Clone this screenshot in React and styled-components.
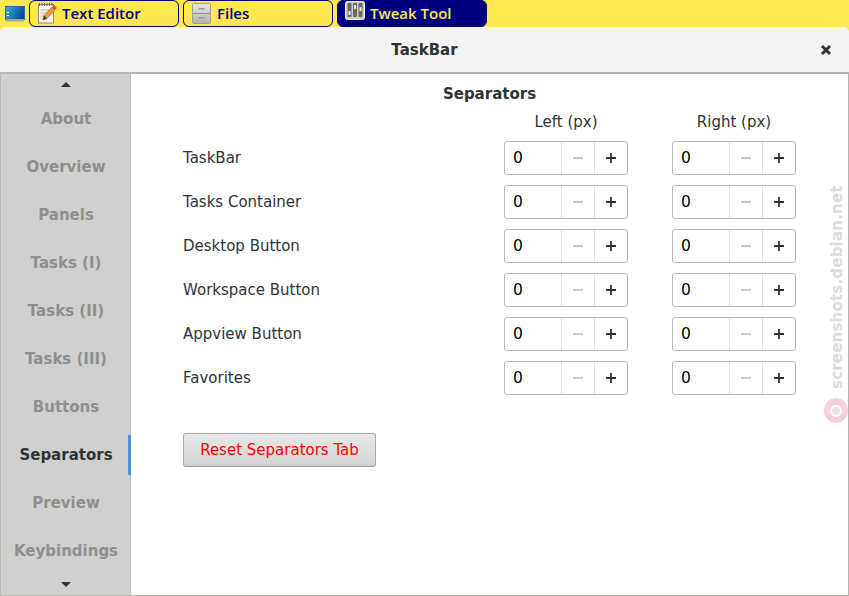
import React from 'react';
import styled, { createGlobalStyle } from 'styled-components';

const GlobalStyle = createGlobalStyle`
  html, body {
    margin: 0;
    padding: 0;
    width: 849px;
    height: 596px;
    overflow: hidden;
    background: #ffe84f;
  }
  * { box-sizing: border-box; }
`;

const Page = styled.div`
  position: relative;
  width: 849px;
  height: 596px;
  display: flex;
  flex-direction: column;
  font-family: "DejaVu Sans", sans-serif;
  color: #2e3436;
`;

const TaskBar = styled.div`
  height: 27px;
  display: flex;
  align-items: stretch;
  gap: 4px;
  padding-left: 5px;
  background: #ffe84f;
`;

const DesktopIcon = styled.div`
  display: flex;
  align-items: center;
  width: 20px;
`;

const Task = styled.div`
  width: 150px;
  height: 27px;
  display: flex;
  align-items: center;
  gap: 5px;
  padding: 0 0 1px 7px;
  border: 1px solid #000080;
  border-radius: 6px;
  background: ${p => (p.$active ? '#000080' : 'linear-gradient(#ffe84f, #fde650)')};
  color: ${p => (p.$active ? '#ffe84f' : '#000080')};
  font-family: "Open Sans", sans-serif;
  font-weight: 600;
  font-size: 15px;
  line-height: 20px;
  svg { flex: none; }
`;

const Window = styled.div`
  flex: 1;
  display: flex;
  flex-direction: column;
  background: #fff;
  border-radius: 6px 6px 0 0;
  overflow: hidden;
`;

const TitleBar = styled.div`
  position: relative;
  height: 47px;
  flex: none;
  display: flex;
  align-items: center;
  justify-content: center;
  background: #f3f3f3;
  border-bottom: 2px solid #b6b6b3;
  font-size: 15px;
  font-weight: 700;
`;

const CloseButton = styled.svg`
  position: absolute;
  right: 17px;
  top: 17px;
`;

const Body = styled.div`
  flex: 1;
  display: flex;
  border: 1px solid #b6b6b3;
  border-top: 0;
`;

const Sidebar = styled.div`
  width: 130px;
  flex: none;
  display: flex;
  flex-direction: column;
  align-items: stretch;
  background: #d0d0ce;
  border-right: 1px solid #b6b6b3;
`;

const Arrow = styled.div`
  height: ${p => p.$height}px;
  display: flex;
  align-items: ${p => (p.$down ? 'flex-start' : 'center')};
  justify-content: center;
  padding-top: ${p => (p.$down ? 7 : 0)}px;
  &::before {
    content: '';
    border-left: 5px solid transparent;
    border-right: 5px solid transparent;
    ${p => (p.$down ? 'border-top' : 'border-bottom')}: 5px solid #2e3436;
  }
`;

const NavItem = styled.div`
  height: 40px;
  margin: 4px -1px 4px 0;
  display: flex;
  align-items: center;
  justify-content: center;
  padding-left: 3px;
  font-size: 15px;
  font-weight: 700;
  white-space: nowrap;
  color: ${p => (p.$active ? '#2e3436' : '#8e8f8e')};
  border-right: 3px solid ${p => (p.$active ? '#4a90d9' : 'transparent')};
`;

const Content = styled.div`
  flex: 1;
  display: flex;
  flex-direction: column;
  padding: 11px 0 0 52px;
`;

const Heading = styled.div`
  margin-left: -52px;
  height: 19px;
  line-height: 19px;
  text-align: center;
  font-size: 15px;
  font-weight: 700;
`;

const Grid = styled.div`
  display: grid;
  grid-template-columns: 321px 124px 168px;
  row-gap: 10px;
  margin-top: 8px;
  & > :nth-child(3n) { margin-left: 44px; }
`;

const ColumnHead = styled.div`
  width: 124px;
  height: 19px;
  line-height: 21px;
  text-align: center;
  font-size: 15px;
  white-space: nowrap;
`;

const RowLabel = styled.div`
  display: flex;
  align-items: center;
  padding-bottom: 1px;
  font-size: 15px;
`;

const Spin = styled.div`
  width: 124px;
  height: 34px;
  display: flex;
  background: #fff;
  border: 1px solid #b6b6b3;
  border-radius: 3px;
`;

const SpinValue = styled.div`
  flex: 1;
  display: flex;
  align-items: center;
  padding: 0 0 1px 8px;
  font-size: 15.5px;
  color: #000;
`;

const SpinButton = styled.div`
  width: 33px;
  display: flex;
  align-items: center;
  justify-content: center;
  border-left: 1px solid #e2e2e0;
  color: ${p => (p.$disabled ? '#c6c7c6' : '#2e3436')};
`;

const ResetButton = styled.button`
  align-self: flex-start;
  width: 193px;
  height: 34px;
  margin-top: 38px;
  padding: 0 0 1px;
  font-family: inherit;
  font-size: 15px;
  color: #ff0000;
  background: linear-gradient(#e9e9e7, #d3d3d1);
  border: 1px solid #a9a9a7;
  border-bottom-color: #9c9c9a;
  border-radius: 3px;
`;

const Watermark = styled.div`
  position: absolute;
  left: 837px;
  top: 389px;
  transform-origin: 0 0;
  transform: rotate(-90deg) translateY(-50%);
  font-size: 15px;
  font-weight: 700;
  letter-spacing: 0.2px;
  color: #dcdcdc;
  white-space: nowrap;
`;

const WatermarkLogo = styled.div`
  position: absolute;
  left: 824px;
  top: 398px;
  width: 24px;
  height: 25px;
  border-radius: 50%;
  background: #f5d0dc;
  display: flex;
  align-items: center;
  justify-content: center;
  &::after {
    content: '';
    width: 8px;
    height: 8px;
    border-radius: 50%;
    border: 2px solid #fff;
    background: #f0dfe4;
  }
`;

const ScreenIcon = () => (
  <svg width="20" height="16" viewBox="0 0 20 16">
    <defs>
      <linearGradient id="screen" x1="0" y1="0" x2="1" y2="0.4">
        <stop offset="0" stopColor="#35b3dc" />
        <stop offset="1" stopColor="#0b4f97" />
      </linearGradient>
    </defs>
    <rect x="0.5" y="0.5" width="19" height="13" fill="url(#screen)" stroke="#2a6a8f" />
    <rect x="1" y="13" width="18" height="2.5" fill="#9aa8a0" />
    <rect x="2" y="6" width="2" height="1" fill="#fff" />
    <rect x="2" y="9" width="2" height="1" fill="#fff" />
  </svg>
);

const EditorIcon = () => (
  <svg width="20" height="22" viewBox="0 0 20 22">
    <rect x="1.5" y="2.5" width="15" height="18.5" fill="#f7f7f3" stroke="#8a8a80" />
    <path d="M2.5 1v3M5 1v3M7.5 1v3M10 1v3M12.5 1v3M15 1v3" stroke="#66665f" />
    <path d="M3.5 8h11M3.5 11h8M3.5 14h6M3.5 17h4" stroke="#b3b3aa" />
    <path d="M6 18l1-4.5L15 5l3 3-8 8.5z" fill="#f09a30" stroke="#a85f14" strokeWidth="0.6" />
    <path d="M15 5l2-2 3 3-2 2z" fill="#e8463c" />
    <path d="M6 18l1-4.5 3 3z" fill="#4a3a2a" />
  </svg>
);

const FilesIcon = () => (
  <svg width="21" height="21" viewBox="0 0 21 21">
    <defs>
      <linearGradient id="drawer" x1="0" y1="0" x2="0" y2="1">
        <stop offset="0" stopColor="#e6e6e2" />
        <stop offset="1" stopColor="#b5b5ae" />
      </linearGradient>
    </defs>
    <rect x="1.5" y="0.5" width="18" height="20" rx="1" fill="url(#drawer)" stroke="#a2a29a" />
    <path d="M2 10.5h17" stroke="#8f8f88" />
    <rect x="7.5" y="5" width="6" height="1.5" fill="#9a9a94" />
    <rect x="7.5" y="14" width="6" height="1.5" fill="#9a9a94" />
  </svg>
);

const TweakIcon = () => (
  <svg width="20" height="21" viewBox="0 0 20 21" style={{ marginTop: -4 }}>
    <rect x="0.5" y="0.5" width="19" height="18" rx="2" fill="#cfcfca" stroke="#efefec" />
    <rect x="2.5" y="2" width="4" height="14" rx="1" fill="#6a6a64" />
    <rect x="8" y="2" width="4" height="14" rx="1" fill="#6a6a64" />
    <rect x="13.5" y="2" width="4" height="14" rx="1" fill="#6a6a64" />
    <rect x="3.5" y="10" width="2" height="4" fill="#e8e8e4" />
    <rect x="9" y="4" width="2" height="4" fill="#e8e8e4" />
    <rect x="14.5" y="6" width="2" height="4" fill="#e8e8e4" />
  </svg>
);

const PlusIcon = () => (
  <svg width="10" height="10" viewBox="0 0 10 10">
    <path d="M0 5h10M5 0v10" stroke="currentColor" strokeWidth="1.8" />
  </svg>
);

const MinusIcon = () => (
  <svg width="10" height="10" viewBox="0 0 10 10">
    <path d="M0 5h10" stroke="currentColor" strokeWidth="1.8" />
  </svg>
);

const navItems = ['About', 'Overview', 'Panels', 'Tasks (I)', 'Tasks (II)', 'Tasks (III)', 'Buttons', 'Separators', 'Preview', 'Keybindings'];
const rows = ['TaskBar', 'Tasks Container', 'Desktop Button', 'Workspace Button', 'Appview Button', 'Favorites'];

const SpinBox = () => (
  <Spin>
    <SpinValue>0</SpinValue>
    <SpinButton $disabled><MinusIcon /></SpinButton>
    <SpinButton><PlusIcon /></SpinButton>
  </Spin>
);

const App = () => {
  return (
    <Page>
      <GlobalStyle />
      <TaskBar>
        <DesktopIcon><ScreenIcon /></DesktopIcon>
        <Task><EditorIcon /><span>Text Editor</span></Task>
        <Task><FilesIcon /><span>Files</span></Task>
        <Task $active><TweakIcon /><span>Tweak Tool</span></Task>
      </TaskBar>
      <Window>
        <TitleBar>
          TaskBar
          <CloseButton width="12" height="12" viewBox="0 0 12 12">
            <path d="M2 2l8 8M10 2l-8 8" stroke="#2e3436" strokeWidth="3" />
          </CloseButton>
        </TitleBar>
        <Body>
          <Sidebar>
            <Arrow $height={21} />
            {navItems.map(item => (
              <NavItem key={item} $active={item === 'Separators'}>{item}</NavItem>
            ))}
            <Arrow $down $height={19} />
          </Sidebar>
          <Content>
            <Heading>Separators</Heading>
            <Grid>
              <div />
              <ColumnHead>Left (px)</ColumnHead>
              <ColumnHead>Right (px)</ColumnHead>
              {rows.map(row => (
                <React.Fragment key={row}>
                  <RowLabel>{row}</RowLabel>
                  <SpinBox />
                  <SpinBox />
                </React.Fragment>
              ))}
            </Grid>
            <ResetButton>Reset Separators Tab</ResetButton>
          </Content>
        </Body>
      </Window>
      <Watermark>screenshots.debian.net</Watermark>
      <WatermarkLogo />
    </Page>
  );
};

export default App;
